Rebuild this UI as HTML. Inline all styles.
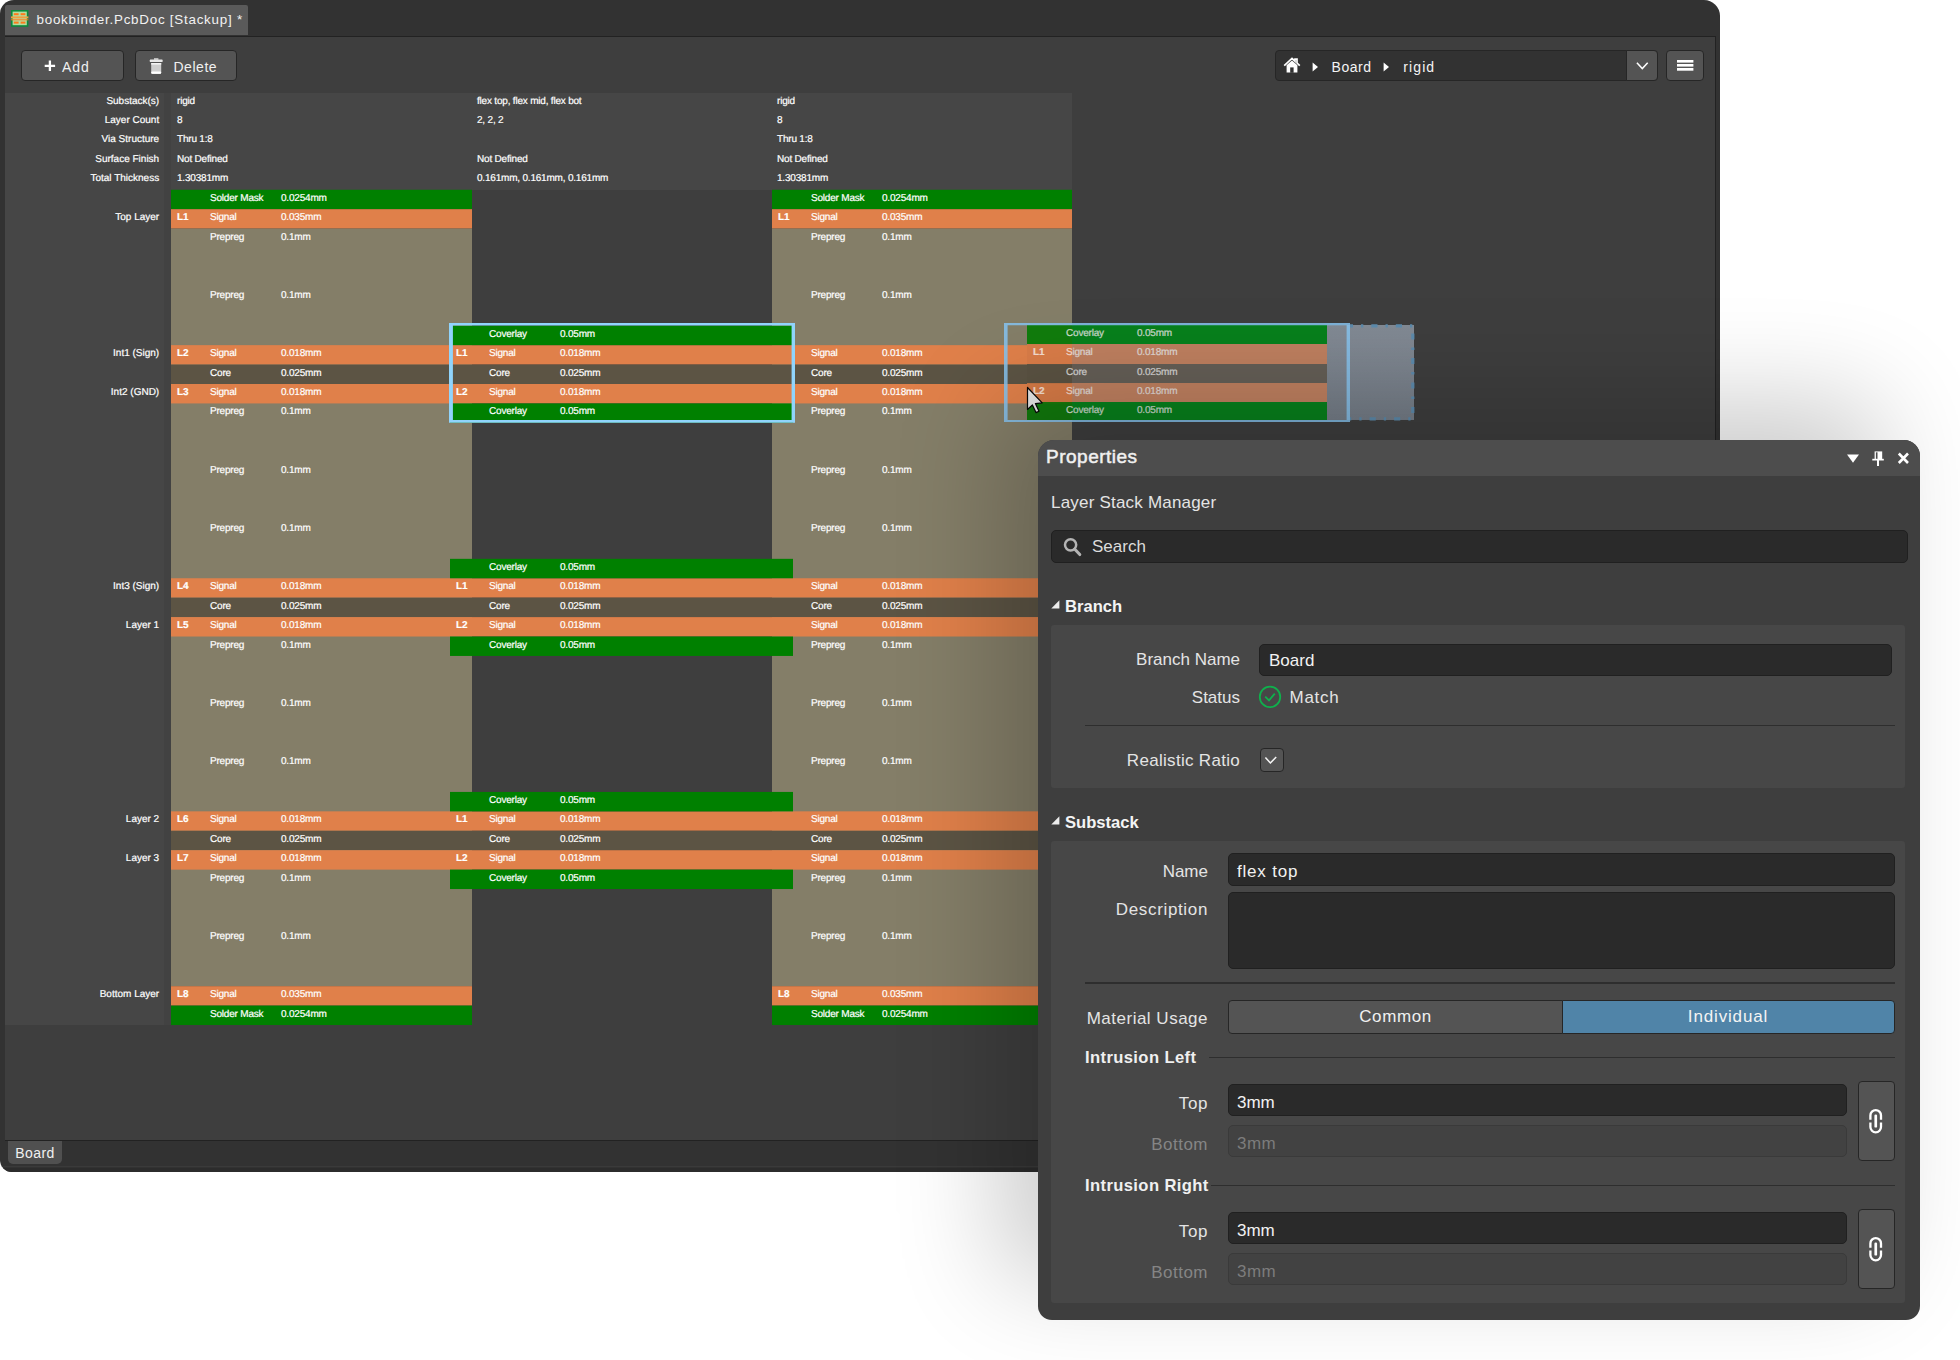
<!DOCTYPE html><html><head><meta charset="utf-8"><title>Stackup</title><style>
*{box-sizing:border-box;margin:0;padding:0}
html,body{width:1960px;height:1360px;background:#fff;overflow:hidden}
body{position:relative;font-family:"Liberation Sans",sans-serif;color:#fff}
.a{position:absolute}
#win{left:0;top:0;width:1720px;height:1171.5px;background:#323232;border-radius:14px 16px 0 12px;overflow:hidden}
#tab{left:5px;top:5px;width:243px;height:29.5px;background:#5a5a5a;border-radius:2px 2px 0 0;font-size:13.4px;letter-spacing:.75px;line-height:29px;color:#f2f2f2;white-space:nowrap}
#content{left:5px;top:35.7px;width:1711.2px;height:1105.4px;background:#222}#content div{left:0;top:1px;width:1710.3px;height:1103.3px;background:#3e3e3e}
.btn{background:#545454;border:1.3px solid #262626;border-radius:4px;font-size:14px;letter-spacing:1px;color:#f0f0f0;white-space:nowrap}
.t{font-size:10px;letter-spacing:-.2px;line-height:16.8px;-webkit-text-stroke:.2px #fff;transform:rotate(.03deg);height:19.41px;white-space:nowrap;color:#fff}
.b{font-weight:bold}
.row{left:0;height:19.41px}
#stack .t{position:absolute}
/* properties */
#panel{left:1038px;top:440px;width:882px;height:879.5px;background:#3e3e3e;border-radius:16px 16px 14px 14px;box-shadow:-40px -40px 105px rgba(0,0,0,.2)}
#ptitle{left:0;top:0;width:882px;height:35.5px;background:#4d4d4d;border-radius:16px 16px 0 0}
.p{font-size:17px;color:#e4e4e4;white-space:nowrap;line-height:20px}
.lab{text-align:right;width:220px}
.sec{background:#474747;border-radius:3px}
.inp{background:#2a2a2a;border:1.2px solid #202020;border-radius:5px}
.dis{background:#424242;border:1.2px solid #3a3a3a;border-radius:5px}
.hr{height:1.6px;background:#2e2e2e}
</style></head><body>
<div id="win" class="a">
<div id="tab" class="a"><svg class="a" style="left:6.2px;top:5px" width="18" height="17" viewBox="0 0 18 17"><rect x="0" y="0" width="17.4" height="16.8" fill="#0a8a3c"/><rect x="1.6" y="1.6" width="14.2" height="13.6" fill="#b4dca0"/><rect x="2.8" y="3.2" width="4.8" height="2" fill="#ff7a1a"/><rect x="9.6" y="3.2" width="4.8" height="2" fill="#ff7a1a"/><rect x="2.8" y="11.6" width="4.8" height="2" fill="#ff7a1a"/><rect x="9.6" y="11.6" width="4.8" height="2" fill="#ff7a1a"/><rect x="0" y="6.4" width="17.4" height="2" fill="#f0a040"/><rect x="0" y="9.3" width="17.4" height="1" fill="#ff7a1a"/></svg><span class="a" style="left:31.5px;top:0">bookbinder.PcbDoc [Stackup] *</span></div>
<div id="content" class="a"><div class="a"></div></div>
<div class="a btn" style="left:21px;top:50.2px;width:102.6px;height:30.4px"><svg class="a" style="left:21.5px;top:9px" width="12" height="12" viewBox="0 0 12 12"><path d="M5.9 0.6v10.4M0.7 5.8h10.4" stroke="#fff" stroke-width="2.3" fill="none"/></svg><span class="a" style="left:40px;top:7.6px;line-height:16px">Add</span></div>
<div class="a btn" style="left:135px;top:50.2px;width:102px;height:30.4px"><svg class="a" style="left:13px;top:6px" width="15" height="18" viewBox="0 0 15 18"><path d="M5 1.2h4.4v1.6h-4.4z" fill="#ddd"/><rect x="0.8" y="2.6" width="12.8" height="2.4" rx="0.6" fill="#e8e8e8"/><path d="M2.2 6h10v9.4q0 1.6-1.6 1.6h-6.8q-1.6 0-1.6-1.6z" fill="#cfcfcf"/><rect x="2.2" y="6" width="10" height="1.6" fill="#f4f4f4"/><rect x="2.2" y="14.6" width="10" height="2.2" rx="1" fill="#fff"/></svg><span class="a" style="left:37.4px;top:7.6px;line-height:16px;letter-spacing:.55px">Delete</span></div>
<div class="a" style="left:1275.3px;top:50.2px;width:383px;height:30.4px;background:#323232;border:1.3px solid #262626;border-radius:4px"></div>
<svg class="a" style="left:1283px;top:57px" width="18" height="17" viewBox="0 0 18 17"><path d="M1.2 8.6L9 1.4l3 2.8V2.2h2v3.8l2.8 2.6" fill="none" stroke="#fff" stroke-width="1.7"/><path d="M3.6 8.2v7.4h10.8V8.2L9 3.4z" fill="#fff"/><rect x="7.2" y="10.4" width="3.4" height="5.4" fill="#323232"/></svg>
<svg class="a" style="left:1312px;top:61.5px" width="7" height="10" viewBox="0 0 7 10"><path d="M0.6 0.4L6 4.9L0.6 9.4z" fill="#fff"/></svg>
<div class="a" style="left:1331.5px;top:58.6px;font-size:14px;letter-spacing:.55px;line-height:16px;color:#f4f4f4">Board</div>
<svg class="a" style="left:1383px;top:61.5px" width="7" height="10" viewBox="0 0 7 10"><path d="M0.6 0.4L6 4.9L0.6 9.4z" fill="#fff"/></svg>
<div class="a" style="left:1403.3px;top:58.6px;font-size:14px;letter-spacing:1.1px;line-height:16px;color:#f4f4f4">rigid</div>
<div class="a btn" style="left:1626.4px;top:50.2px;width:31.9px;height:30.4px;border-radius:0 4px 4px 0"><svg class="a" style="left:8.5px;top:10.5px" width="13" height="9" viewBox="0 0 13 9"><path d="M0.9 0.8L6.3 6.6L11.7 0.8" fill="none" stroke="#fff" stroke-width="1.5"/></svg></div>
<div class="a btn" style="left:1666.2px;top:50.2px;width:37.4px;height:30.4px"><svg class="a" style="left:9.5px;top:8.5px" width="17" height="12" viewBox="0 0 17 12"><rect x="0" y="0" width="16.4" height="2.6" fill="#fff"/><rect x="0" y="4" width="16.4" height="2.6" fill="#fff"/><rect x="0" y="8" width="16.4" height="2.7" fill="#fff"/></svg></div>
<div id="stack" class="a" style="left:0;top:0;width:1720px;height:1100px">
<div class="a" style="left:5px;top:92.62px;width:1067px;height:97.12px;background:#464646"></div>
<div class="a" style="left:5px;top:92.62px;width:159px;height:932.4px;background:#464646"></div>
<div class="a" style="left:164px;top:92.62px;width:7px;height:932.4px;background:#424242"></div>
<div class="t" style="left:5px;top:92.62px;width:154.2px;text-align:right;letter-spacing:0">Substack(s)</div>
<div class="t" style="left:176.5px;top:92.62px">rigid</div>
<div class="t" style="left:476.5px;top:92.62px">flex top, flex mid, flex bot</div>
<div class="t" style="left:777px;top:92.62px">rigid</div>
<div class="t" style="left:5px;top:112.05px;width:154.2px;text-align:right;letter-spacing:0">Layer Count</div>
<div class="t" style="left:176.5px;top:112.05px">8</div>
<div class="t" style="left:476.5px;top:112.05px">2, 2, 2</div>
<div class="t" style="left:777px;top:112.05px">8</div>
<div class="t" style="left:5px;top:131.47px;width:154.2px;text-align:right;letter-spacing:0">Via Structure</div>
<div class="t" style="left:176.5px;top:131.47px">Thru 1:8</div>
<div class="t" style="left:777px;top:131.47px">Thru 1:8</div>
<div class="t" style="left:5px;top:150.9px;width:154.2px;text-align:right;letter-spacing:0">Surface Finish</div>
<div class="t" style="left:176.5px;top:150.9px">Not Defined</div>
<div class="t" style="left:476.5px;top:150.9px">Not Defined</div>
<div class="t" style="left:777px;top:150.9px">Not Defined</div>
<div class="t" style="left:5px;top:170.32px;width:154.2px;text-align:right;letter-spacing:0">Total Thickness</div>
<div class="t" style="left:176.5px;top:170.32px">1.30381mm</div>
<div class="t" style="left:476.5px;top:170.32px">0.161mm, 0.161mm, 0.161mm</div>
<div class="t" style="left:777px;top:170.32px">1.30381mm</div>
<svg class="a" style="left:0;top:0" width="1720" height="1100" viewBox="0 0 1720 1100">
<rect x="171" y="189.75" width="301" height="19.43" fill="#008000"/>
<rect x="171" y="209.18" width="301" height="19.42" fill="#e0804a"/>
<rect x="171" y="228.6" width="301" height="757.58" fill="#847e68"/>
<rect x="171" y="986.18" width="301" height="19.42" fill="#e0804a"/>
<rect x="171" y="1005.6" width="301" height="19.43" fill="#008000"/>
<rect x="772" y="189.75" width="300" height="19.43" fill="#008000"/>
<rect x="772" y="209.18" width="300" height="19.42" fill="#e0804a"/>
<rect x="772" y="228.6" width="300" height="757.58" fill="#847e68"/>
<rect x="772" y="986.18" width="300" height="19.42" fill="#e0804a"/>
<rect x="772" y="1005.6" width="300" height="19.43" fill="#008000"/>
<rect x="171" y="345.15" width="901" height="19.43" fill="#e0804a"/>
<rect x="171" y="364.58" width="901" height="19.42" fill="#5c5444"/>
<rect x="171" y="384.0" width="901" height="19.43" fill="#e0804a"/>
<rect x="450" y="325.73" width="343" height="19.42" fill="#008000"/>
<rect x="450" y="403.43" width="343" height="19.42" fill="#008000"/>
<rect x="171" y="578.25" width="901" height="19.42" fill="#e0804a"/>
<rect x="171" y="597.67" width="901" height="19.43" fill="#5c5444"/>
<rect x="171" y="617.1" width="901" height="19.43" fill="#e0804a"/>
<rect x="450" y="558.83" width="343" height="19.42" fill="#008000"/>
<rect x="450" y="636.53" width="343" height="19.42" fill="#008000"/>
<rect x="171" y="811.35" width="901" height="19.42" fill="#e0804a"/>
<rect x="171" y="830.77" width="901" height="19.43" fill="#5c5444"/>
<rect x="171" y="850.2" width="901" height="19.42" fill="#e0804a"/>
<rect x="450" y="791.93" width="343" height="19.42" fill="#008000"/>
<rect x="450" y="869.62" width="343" height="19.43" fill="#008000"/>
</svg>
<div class="t" style="left:5px;top:209.18px;width:154.2px;text-align:right;letter-spacing:0">Top Layer</div>
<div class="t" style="left:5px;top:345.15px;width:154.2px;text-align:right;letter-spacing:0">Int1 (Sign)</div>
<div class="t" style="left:5px;top:384.0px;width:154.2px;text-align:right;letter-spacing:0">Int2 (GND)</div>
<div class="t" style="left:5px;top:578.25px;width:154.2px;text-align:right;letter-spacing:0">Int3 (Sign)</div>
<div class="t" style="left:5px;top:617.1px;width:154.2px;text-align:right;letter-spacing:0">Layer 1</div>
<div class="t" style="left:5px;top:811.35px;width:154.2px;text-align:right;letter-spacing:0">Layer 2</div>
<div class="t" style="left:5px;top:850.2px;width:154.2px;text-align:right;letter-spacing:0">Layer 3</div>
<div class="t" style="left:5px;top:986.18px;width:154.2px;text-align:right;letter-spacing:0">Bottom Layer</div>
<div class="t" style="left:210.2px;top:189.75px">Solder Mask</div>
<div class="t" style="left:281.2px;top:189.75px">0.0254mm</div>
<div class="t" style="left:811.2px;top:189.75px">Solder Mask</div>
<div class="t" style="left:882.2px;top:189.75px">0.0254mm</div>
<div class="t" style="left:210.2px;top:209.18px">Signal</div>
<div class="t" style="left:281.2px;top:209.18px">0.035mm</div>
<div class="t" style="left:811.2px;top:209.18px">Signal</div>
<div class="t" style="left:882.2px;top:209.18px">0.035mm</div>
<div class="t b" style="left:177.2px;top:209.18px">L1</div>
<div class="t b" style="left:778.2px;top:209.18px">L1</div>
<div class="t" style="left:210.2px;top:228.6px">Prepreg</div>
<div class="t" style="left:281.2px;top:228.6px">0.1mm</div>
<div class="t" style="left:811.2px;top:228.6px">Prepreg</div>
<div class="t" style="left:882.2px;top:228.6px">0.1mm</div>
<div class="t" style="left:210.2px;top:286.88px">Prepreg</div>
<div class="t" style="left:281.2px;top:286.88px">0.1mm</div>
<div class="t" style="left:811.2px;top:286.88px">Prepreg</div>
<div class="t" style="left:882.2px;top:286.88px">0.1mm</div>
<div class="t" style="left:210.2px;top:345.15px">Signal</div>
<div class="t" style="left:281.2px;top:345.15px">0.018mm</div>
<div class="t" style="left:811.2px;top:345.15px">Signal</div>
<div class="t" style="left:882.2px;top:345.15px">0.018mm</div>
<div class="t b" style="left:177.2px;top:345.15px">L2</div>
<div class="t" style="left:210.2px;top:364.58px">Core</div>
<div class="t" style="left:281.2px;top:364.58px">0.025mm</div>
<div class="t" style="left:811.2px;top:364.58px">Core</div>
<div class="t" style="left:882.2px;top:364.58px">0.025mm</div>
<div class="t" style="left:210.2px;top:384.0px">Signal</div>
<div class="t" style="left:281.2px;top:384.0px">0.018mm</div>
<div class="t" style="left:811.2px;top:384.0px">Signal</div>
<div class="t" style="left:882.2px;top:384.0px">0.018mm</div>
<div class="t b" style="left:177.2px;top:384.0px">L3</div>
<div class="t" style="left:210.2px;top:403.43px">Prepreg</div>
<div class="t" style="left:281.2px;top:403.43px">0.1mm</div>
<div class="t" style="left:811.2px;top:403.43px">Prepreg</div>
<div class="t" style="left:882.2px;top:403.43px">0.1mm</div>
<div class="t" style="left:210.2px;top:461.7px">Prepreg</div>
<div class="t" style="left:281.2px;top:461.7px">0.1mm</div>
<div class="t" style="left:811.2px;top:461.7px">Prepreg</div>
<div class="t" style="left:882.2px;top:461.7px">0.1mm</div>
<div class="t" style="left:210.2px;top:519.98px">Prepreg</div>
<div class="t" style="left:281.2px;top:519.98px">0.1mm</div>
<div class="t" style="left:811.2px;top:519.98px">Prepreg</div>
<div class="t" style="left:882.2px;top:519.98px">0.1mm</div>
<div class="t" style="left:210.2px;top:578.25px">Signal</div>
<div class="t" style="left:281.2px;top:578.25px">0.018mm</div>
<div class="t" style="left:811.2px;top:578.25px">Signal</div>
<div class="t" style="left:882.2px;top:578.25px">0.018mm</div>
<div class="t b" style="left:177.2px;top:578.25px">L4</div>
<div class="t" style="left:210.2px;top:597.67px">Core</div>
<div class="t" style="left:281.2px;top:597.67px">0.025mm</div>
<div class="t" style="left:811.2px;top:597.67px">Core</div>
<div class="t" style="left:882.2px;top:597.67px">0.025mm</div>
<div class="t" style="left:210.2px;top:617.1px">Signal</div>
<div class="t" style="left:281.2px;top:617.1px">0.018mm</div>
<div class="t" style="left:811.2px;top:617.1px">Signal</div>
<div class="t" style="left:882.2px;top:617.1px">0.018mm</div>
<div class="t b" style="left:177.2px;top:617.1px">L5</div>
<div class="t" style="left:210.2px;top:636.53px">Prepreg</div>
<div class="t" style="left:281.2px;top:636.53px">0.1mm</div>
<div class="t" style="left:811.2px;top:636.53px">Prepreg</div>
<div class="t" style="left:882.2px;top:636.53px">0.1mm</div>
<div class="t" style="left:210.2px;top:694.8px">Prepreg</div>
<div class="t" style="left:281.2px;top:694.8px">0.1mm</div>
<div class="t" style="left:811.2px;top:694.8px">Prepreg</div>
<div class="t" style="left:882.2px;top:694.8px">0.1mm</div>
<div class="t" style="left:210.2px;top:753.08px">Prepreg</div>
<div class="t" style="left:281.2px;top:753.08px">0.1mm</div>
<div class="t" style="left:811.2px;top:753.08px">Prepreg</div>
<div class="t" style="left:882.2px;top:753.08px">0.1mm</div>
<div class="t" style="left:210.2px;top:811.35px">Signal</div>
<div class="t" style="left:281.2px;top:811.35px">0.018mm</div>
<div class="t" style="left:811.2px;top:811.35px">Signal</div>
<div class="t" style="left:882.2px;top:811.35px">0.018mm</div>
<div class="t b" style="left:177.2px;top:811.35px">L6</div>
<div class="t" style="left:210.2px;top:830.77px">Core</div>
<div class="t" style="left:281.2px;top:830.77px">0.025mm</div>
<div class="t" style="left:811.2px;top:830.77px">Core</div>
<div class="t" style="left:882.2px;top:830.77px">0.025mm</div>
<div class="t" style="left:210.2px;top:850.2px">Signal</div>
<div class="t" style="left:281.2px;top:850.2px">0.018mm</div>
<div class="t" style="left:811.2px;top:850.2px">Signal</div>
<div class="t" style="left:882.2px;top:850.2px">0.018mm</div>
<div class="t b" style="left:177.2px;top:850.2px">L7</div>
<div class="t" style="left:210.2px;top:869.62px">Prepreg</div>
<div class="t" style="left:281.2px;top:869.62px">0.1mm</div>
<div class="t" style="left:811.2px;top:869.62px">Prepreg</div>
<div class="t" style="left:882.2px;top:869.62px">0.1mm</div>
<div class="t" style="left:210.2px;top:927.9px">Prepreg</div>
<div class="t" style="left:281.2px;top:927.9px">0.1mm</div>
<div class="t" style="left:811.2px;top:927.9px">Prepreg</div>
<div class="t" style="left:882.2px;top:927.9px">0.1mm</div>
<div class="t" style="left:210.2px;top:986.18px">Signal</div>
<div class="t" style="left:281.2px;top:986.18px">0.035mm</div>
<div class="t" style="left:811.2px;top:986.18px">Signal</div>
<div class="t" style="left:882.2px;top:986.18px">0.035mm</div>
<div class="t b" style="left:177.2px;top:986.18px">L8</div>
<div class="t b" style="left:778.2px;top:986.18px">L8</div>
<div class="t" style="left:210.2px;top:1005.6px">Solder Mask</div>
<div class="t" style="left:281.2px;top:1005.6px">0.0254mm</div>
<div class="t" style="left:811.2px;top:1005.6px">Solder Mask</div>
<div class="t" style="left:882.2px;top:1005.6px">0.0254mm</div>
<div class="t" style="left:489px;top:325.73px">Coverlay</div>
<div class="t" style="left:560px;top:325.73px">0.05mm</div>
<div class="t b" style="left:456px;top:345.15px">L1</div>
<div class="t" style="left:489px;top:345.15px">Signal</div>
<div class="t" style="left:560px;top:345.15px">0.018mm</div>
<div class="t" style="left:489px;top:364.58px">Core</div>
<div class="t" style="left:560px;top:364.58px">0.025mm</div>
<div class="t b" style="left:456px;top:384.0px">L2</div>
<div class="t" style="left:489px;top:384.0px">Signal</div>
<div class="t" style="left:560px;top:384.0px">0.018mm</div>
<div class="t" style="left:489px;top:403.43px">Coverlay</div>
<div class="t" style="left:560px;top:403.43px">0.05mm</div>
<div class="t" style="left:489px;top:558.83px">Coverlay</div>
<div class="t" style="left:560px;top:558.83px">0.05mm</div>
<div class="t b" style="left:456px;top:578.25px">L1</div>
<div class="t" style="left:489px;top:578.25px">Signal</div>
<div class="t" style="left:560px;top:578.25px">0.018mm</div>
<div class="t" style="left:489px;top:597.67px">Core</div>
<div class="t" style="left:560px;top:597.67px">0.025mm</div>
<div class="t b" style="left:456px;top:617.1px">L2</div>
<div class="t" style="left:489px;top:617.1px">Signal</div>
<div class="t" style="left:560px;top:617.1px">0.018mm</div>
<div class="t" style="left:489px;top:636.53px">Coverlay</div>
<div class="t" style="left:560px;top:636.53px">0.05mm</div>
<div class="t" style="left:489px;top:791.93px">Coverlay</div>
<div class="t" style="left:560px;top:791.93px">0.05mm</div>
<div class="t b" style="left:456px;top:811.35px">L1</div>
<div class="t" style="left:489px;top:811.35px">Signal</div>
<div class="t" style="left:560px;top:811.35px">0.018mm</div>
<div class="t" style="left:489px;top:830.77px">Core</div>
<div class="t" style="left:560px;top:830.77px">0.025mm</div>
<div class="t b" style="left:456px;top:850.2px">L2</div>
<div class="t" style="left:489px;top:850.2px">Signal</div>
<div class="t" style="left:560px;top:850.2px">0.018mm</div>
<div class="t" style="left:489px;top:869.62px">Coverlay</div>
<div class="t" style="left:560px;top:869.62px">0.05mm</div>
<svg class="a" style="left:449px;top:322.9px" width="346.3" height="99.8" viewBox="0 0 346.3 99.8"><path fill-rule="evenodd" fill="#90d4fc" d="M0 0H346.3V99.8H0zM3.9 2.4V97.1H342.6V2.4z"/></svg>
<div class="a" style="left:1327px;top:325px;width:86.8px;height:95px;background:linear-gradient(#828a94,#757d87)"></div>
<svg class="a" style="left:1350px;top:322px" width="67" height="101" viewBox="0 0 67 101"><path d="M0 3.9H62.8V96.9H0" fill="none" stroke="#5c8aac" stroke-width="3.2" stroke-dasharray="3 8 2.3 8 6.2 8 2.3 8 6.2 8 2.3 8 6.2 8 2.3 8 6.2 8 2.3 8 6.2 8 2.3 8 6.2 8 2.3 8 6.2 8 2.3 8 6.2 8 2.3 8 6.2 8 2.3 8 6.2 8 2.3 8 6.2 8"/></svg>
<div class="a" style="left:1027px;top:325.2px;width:300px;height:94.6px;overflow:hidden;opacity:.87"><div class="a" style="left:0;top:-0.2px;width:300px;height:98px">
<div class="a" style="left:0;top:0.0px;width:300px;height:19.35px;background:linear-gradient(90deg,#007c00 0,#007c00 45px,#008a17 45px)"></div>
<div class="t" style="left:39px;top:0.0px;opacity:.85;">Coverlay</div><div class="t" style="left:110px;top:0.0px;opacity:.85;">0.05mm</div>
<div class="a" style="left:0;top:19.35px;width:300px;height:19.35px;background:linear-gradient(90deg,#d87c48 0,#d87c48 45px,#d18965 45px)"></div>
<div class="t b" style="left:6px;top:19.35px;opacity:.85;">L1</div>
<div class="t" style="left:39px;top:19.35px;opacity:.85;">Signal</div><div class="t" style="left:110px;top:19.35px;opacity:.85;">0.018mm</div>
<div class="a" style="left:0;top:38.7px;width:300px;height:19.35px;background:linear-gradient(90deg,#5a5242 0,#5a5242 45px,#6a635a 45px)"></div>
<div class="t" style="left:39px;top:38.7px;opacity:.85;">Core</div><div class="t" style="left:110px;top:38.7px;opacity:.85;">0.025mm</div>
<div class="a" style="left:0;top:58.05px;width:300px;height:19.35px;background:linear-gradient(90deg,#d47a46 0,#d47a46 45px,#d18965 45px)"></div>
<div class="t b" style="left:6px;top:58.05px;opacity:.85;">L2</div>
<div class="t" style="left:39px;top:58.05px;opacity:.85;">Signal</div><div class="t" style="left:110px;top:58.05px;opacity:.85;">0.018mm</div>
<div class="a" style="left:0;top:77.4px;width:300px;height:19.35px;background:linear-gradient(90deg,#007800 0,#007800 45px,#008a17 45px)"></div>
<div class="t" style="left:39px;top:77.4px;opacity:.85;">Coverlay</div><div class="t" style="left:110px;top:77.4px;opacity:.85;">0.05mm</div>
</div></div>
<svg class="a" style="left:1003.5px;top:323px" width="346.5" height="99.3" viewBox="0 0 346.5 99.3"><path fill-rule="evenodd" fill="rgba(134,194,236,.88)" d="M0 0H346.5V99.3H0zM3.6 2.2V96.9H342.6V2.2z"/></svg>
<svg class="a" style="left:1025.6px;top:385.6px" width="20" height="30" viewBox="0 0 20 30"><path d="M1.5 1.5V23.5L6.4 19L10 26.6L13 25.2L9.4 17.6L16.2 16.9z" fill="#e6e6e6" stroke="#080808" stroke-width="1.2" stroke-linejoin="round"/></svg>
</div>
<div class="a" style="left:7.9px;top:1141.2px;width:54.3px;height:23.2px;background:#505050;border-radius:0 0 5px 5px;font-size:14px;letter-spacing:.4px;line-height:24.6px;text-align:center;color:#f0f0f0">Board</div><div class="a" style="left:0;top:1165.7px;width:1720px;height:1.8px;background:#3a3a3a"></div><div class="a" style="left:0;top:1167.5px;width:1720px;height:4px;background:#2c2c2c"></div>
</div>
<div id="panel" class="a">
<div id="ptitle" class="a"></div>
<div class="a" style="left:8px;top:5px;font-size:19px;letter-spacing:.5px;line-height:24px;color:#f0f0f0;-webkit-text-stroke:.5px #f0f0f0">Properties</div>
<svg class="a" style="left:808px;top:13.5px" width="14" height="10" viewBox="0 0 14 10"><path d="M1 0.5H13L7 8.8z" fill="#fff"/></svg>
<svg class="a" style="left:834px;top:10.5px" width="12" height="16" viewBox="0 0 12 16"><path d="M2.6 0.4h7.6v7.6h-7.6z" fill="#fff"/><rect x="3.9" y="1.3" width="1.6" height="6.7" fill="#4d4d4d"/><rect x="0.3" y="7.8" width="11.5" height="1.7" fill="#fff"/><rect x="5" y="9" width="2" height="6" fill="#fff"/></svg>
<svg class="a" style="left:859px;top:12px" width="13" height="13" viewBox="0 0 13 13"><path d="M1.8 1.5L11 11M11 1.5L1.8 11" stroke="#fff" stroke-width="2.6" fill="none"/></svg>
<div class="a p" style="left:13px;top:52.7px;letter-spacing:.2px">Layer Stack Manager</div>
<div class="a inp" style="left:13px;top:90px;width:856.5px;height:32.5px;"></div>
<svg class="a" style="left:24.5px;top:97px" width="19" height="20" viewBox="0 0 19 20"><circle cx="7.6" cy="7.8" r="5.6" fill="none" stroke="#b4b4b4" stroke-width="2.5"/><path d="M11.8 12.2L16.8 17.6" stroke="#b4b4b4" stroke-width="3" stroke-linecap="round"/></svg>
<div class="a p" style="left:54px;top:96.8px;color:#dcdcdc">Search</div>
<svg class="a" style="left:12.599999999999909px;top:160.39999999999998px" width="9" height="9" viewBox="0 0 9 9"><path d="M8.4 0.3V8.4H0.3z" fill="#ececec"/></svg>
<div class="a p" style="left:27px;top:156.7px;font-weight:bold;font-size:16.6px;color:#f4f4f4">Branch</div>
<div class="a sec" style="left:13px;top:184.5px;width:853.5px;height:163.5px;"></div>
<div class="a p lab" style="left:-18px;top:210.2px;">Branch Name</div>
<div class="a inp" style="left:221px;top:203.5px;width:632.5px;height:32.5px;"></div>
<div class="a p" style="left:231px;top:211.2px;color:#f2f2f2">Board</div>
<div class="a p lab" style="left:-18px;top:248.1px;">Status</div>
<svg class="a" style="left:220px;top:245px" width="24" height="24" viewBox="0 0 24 24"><circle cx="12" cy="11.9" r="10.2" fill="none" stroke="#0fb04c" stroke-width="1.8"/><path d="M7.2 11.6L11 15.4L16.8 8.6" fill="none" stroke="#0fb04c" stroke-width="1.8"/></svg>
<div class="a p" style="left:251.5px;top:248.1px;letter-spacing:.75px">Match</div>
<div class="a hr" style="left:47px;top:284.7px;width:810px;height:1.6px;"></div>
<div class="a p lab" style="left:-18px;top:311.0px;letter-spacing:.3px">Realistic Ratio</div>
<div class="a btn" style="left:221.5px;top:308.3px;width:24.2px;height:24.0px;border-radius:4px"></div>
<svg class="a" style="left:226px;top:315.5px" width="14" height="10" viewBox="0 0 14 10"><path d="M1.4 1.4L6.4 7L12.2 1" fill="none" stroke="#f4f4f4" stroke-width="1.5"/></svg>
<svg class="a" style="left:12.599999999999909px;top:376.4px" width="9" height="9" viewBox="0 0 9 9"><path d="M8.4 0.3V8.4H0.3z" fill="#ececec"/></svg>
<div class="a p" style="left:27px;top:372.6px;font-weight:bold;font-size:16.6px;color:#f4f4f4">Substack</div>
<div class="a sec" style="left:13px;top:400.6px;width:853.5px;height:462.4px;"></div>
<div class="a p lab" style="left:-50px;top:421.9px;">Name</div>
<div class="a inp" style="left:190px;top:413.2px;width:666.5px;height:32.6px;"></div>
<div class="a p" style="left:199px;top:421.9px;color:#f2f2f2;letter-spacing:.8px">flex top</div>
<div class="a p lab" style="left:-50px;top:460.0px;letter-spacing:.65px">Description</div>
<div class="a inp" style="left:190px;top:451.6px;width:666.5px;height:77.9px;"></div>
<div class="a hr" style="left:47px;top:542.2px;width:810px;height:1.6px;"></div>
<div class="a p lab" style="left:-50px;top:568.7px;letter-spacing:.5px">Material Usage</div>
<div class="a btn" style="left:190px;top:559.6px;width:335px;height:34.0px;border-radius:4px 0 0 4px"></div>
<div class="a p" style="left:190px;top:566.5px;width:335px;text-align:center;letter-spacing:.6px;color:#f0f0f0">Common</div>
<div class="a btn" style="left:524px;top:559.6px;width:332.5px;height:34.0px;border-radius:0 4px 4px 0;background:#5084a8"></div>
<div class="a p" style="left:524px;top:566.5px;width:332px;text-align:center;letter-spacing:.85px;color:#f4f4f4">Individual</div>
<div class="a p" style="left:47px;top:607.7px;font-weight:bold;font-size:16.6px;color:#f0f0f0;letter-spacing:.38px">Intrusion Left</div>
<div class="a hr" style="left:170.7px;top:616.7px;width:686.3px;height:1.6px;"></div>
<div class="a p lab" style="left:-50px;top:654.2px;letter-spacing:.6px">Top</div>
<div class="a inp" style="left:190px;top:644px;width:619px;height:32px;"></div>
<div class="a p" style="left:199px;top:652.7px;color:#f2f2f2">3mm</div>
<div class="a p lab" style="left:-50px;top:694.7px;color:#858585;letter-spacing:.5px">Bottom</div>
<div class="a dis" style="left:190px;top:685.3px;width:619px;height:32.2px;"></div>
<div class="a p" style="left:199px;top:693.7px;color:#7c7c7c;letter-spacing:.5px">3mm</div>
<div class="a btn" style="left:819.5px;top:640.7px;width:37.1px;height:80.7px;border-radius:4px"></div>
<svg class="a" style="left:830px;top:667.5px" width="16" height="27" viewBox="0 0 16 27"><path d="M2.4 11.8V7.4a5.3 5.3 0 0 1 10.6 0v4.4M2.4 14.4v4.6a5.3 5.3 0 0 0 10.6 0v-4.6" fill="none" stroke="#fff" stroke-width="2.3"/><rect x="6.4" y="6.6" width="2.7" height="13" rx="1.2" fill="#fff"/></svg>
<div class="a p" style="left:47px;top:735.7px;font-weight:bold;font-size:16.6px;color:#f0f0f0;letter-spacing:.38px">Intrusion Right</div>
<div class="a hr" style="left:173px;top:744.7px;width:684px;height:1.6px;"></div>
<div class="a p lab" style="left:-50px;top:782.2px;letter-spacing:.6px">Top</div>
<div class="a inp" style="left:190px;top:772px;width:619px;height:32px;"></div>
<div class="a p" style="left:199px;top:780.7px;color:#f2f2f2">3mm</div>
<div class="a p lab" style="left:-50px;top:822.7px;color:#858585;letter-spacing:.5px">Bottom</div>
<div class="a dis" style="left:190px;top:813.3px;width:619px;height:32.2px;"></div>
<div class="a p" style="left:199px;top:821.7px;color:#7c7c7c;letter-spacing:.5px">3mm</div>
<div class="a btn" style="left:819.5px;top:768.7px;width:37.1px;height:80.7px;border-radius:4px"></div>
<svg class="a" style="left:830px;top:795.5px" width="16" height="27" viewBox="0 0 16 27"><path d="M2.4 11.8V7.4a5.3 5.3 0 0 1 10.6 0v4.4M2.4 14.4v4.6a5.3 5.3 0 0 0 10.6 0v-4.6" fill="none" stroke="#fff" stroke-width="2.3"/><rect x="6.4" y="6.6" width="2.7" height="13" rx="1.2" fill="#fff"/></svg>
</div>
</body></html>
